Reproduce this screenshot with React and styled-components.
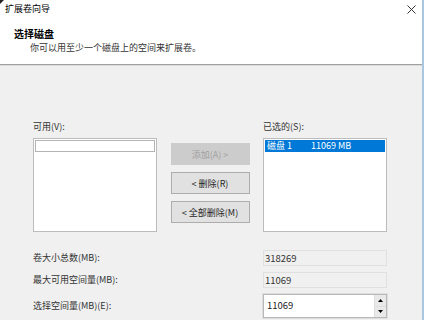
import React from 'react';
import styled, { createGlobalStyle } from 'styled-components';

const GlobalStyle = createGlobalStyle`
  body {
    margin: 0;
    background: #f0f0f0;
    font-family: 'Noto Sans CJK SC', 'Noto Sans', sans-serif;
    -webkit-font-smoothing: antialiased;
  }
`;

const Window = styled.div`
  position: relative;
  width: 422px;
  height: 320px;
  border-right: 2px solid #a9c6e3;
  background: #f0f0f0;
  overflow: hidden;
  color: #1e1e1e;
  font-size: 9px;
  line-height: 12px;

  &::before {
    content: '';
    position: absolute;
    left: 0;
    top: 0;
    border-style: solid;
    border-width: 4px 4px 0 0;
    border-color: #222 transparent transparent transparent;
  }
`;

const TitleBar = styled.div`
  height: 18px;
  display: flex;
  align-items: center;
  justify-content: space-between;
  padding: 0 6px 0 5px;
  background: #fff;
  color: #000;
`;

const Header = styled.div`
  background: #fff;
  padding: 10px 0 10px 14px;
  border-bottom: 1px solid #a0a0a0;
  box-shadow: 0 1px 0 #dadada;
`;

const Heading = styled.div`
  font-size: 10px;
  font-weight: 700;
  color: #000;
`;

const Subtitle = styled.div`
  margin-top: 2px;
  padding-left: 16px;
  color: #333;
`;

const Body = styled.div`
  padding: 56px 0 0 33px;
`;

const Lists = styled.div`
  display: grid;
  grid-template-columns: 124px 106px 124px;
  grid-template-rows: 12px 94px;
  row-gap: 5px;
`;

const Label = styled.div`
  color: #333;
  white-space: nowrap;
`;

const ListBox = styled.div`
  box-sizing: border-box;
  background: #fff;
  border: 1px solid #bcbcbc;
  padding: 1px;
`;

const Item = styled.div`
  box-sizing: border-box;
  height: 12px;
  display: flex;
  align-items: center;
  padding-left: 1px;
  border: 1px solid ${(p) => (p.focus ? '#b4b4b4' : 'transparent')};
  background: ${(p) => (p.selected ? '#0078d7' : 'transparent')};
  color: ${(p) => (p.selected ? '#fff' : '#1e1e1e')};
`;

const Cell = styled.span`
  display: inline-block;
  width: ${(p) => p.w || 'auto'};
`;

const ButtonStack = styled.div`
  grid-column: 2;
  padding-top: 5px;
  display: flex;
  flex-direction: column;
  align-items: center;
  gap: 7px;
`;

const Button = styled.button`
  box-sizing: border-box;
  width: 79px;
  height: 22px;
  padding: 0;
  font-family: inherit;
  font-size: 9px;
  white-space: pre;
  border: 1px solid ${(p) => (p.disabled ? '#cccccc' : '#adadad')};
  background: ${(p) => (p.disabled ? '#cccccc' : '#e1e1e1')};
  color: ${(p) => (p.disabled ? '#a0a0a0' : '#1e1e1e')};
`;

const Fields = styled.div`
  margin-top: 18px;
  display: flex;
  flex-direction: column;
  gap: 6px;
`;

const FieldRow = styled.div`
  display: grid;
  grid-template-columns: 230px 124px;
  align-items: center;
`;

const ValueBox = styled.div`
  box-sizing: border-box;
  height: 16px;
  border: 1px solid #e0e0e0;
  background: #f0f0f0;
  padding-left: 1px;
  line-height: 14px;
  font-size: 9.5px;
  color: #333;
`;

const Spin = styled.div`
  box-sizing: border-box;
  height: 24px;
  display: flex;
  border: 1px solid #b8b8b8;
  box-shadow: 0 0 0 1px #dedede;
  background: #dedede;
`;

const SpinInput = styled.div`
  flex: 1;
  background: #fff;
  padding-left: 3px;
  line-height: 20px;
  font-size: 9.5px;
  color: #222;
  margin-right: 1px;
`;

const SpinButtons = styled.div`
  width: 11px;
  display: flex;
  flex-direction: column;
  gap: 1px;
`;

const SpinButton = styled.div`
  flex: 1;
  display: flex;
  align-items: center;
  justify-content: center;
  background: #e9e9e9;
`;

const Arrow = ({ down }) => (
  <svg width="5" height="3" viewBox="0 0 5 3">
    <path d={down ? 'M0 0 L5 0 L2.5 3 Z' : 'M0 3 L5 3 L2.5 0 Z'} fill="#000" />
  </svg>
);

const CloseIcon = () => (
  <svg width="9" height="9" viewBox="0 0 9 9">
    <path d="M0.5 0.5 L8.5 8.5 M8.5 0.5 L0.5 8.5" stroke="#333" strokeWidth="1" />
  </svg>
);

export default function App() {
  return (
    <>
      <GlobalStyle />
      <Window>
        <TitleBar>
          <span>扩展卷向导</span>
          <CloseIcon />
        </TitleBar>
        <Header>
          <Heading>选择磁盘</Heading>
          <Subtitle>你可以用至少一个磁盘上的空间来扩展卷。</Subtitle>
        </Header>
        <Body>
          <Lists>
            <Label>可用(V):</Label>
            <span />
            <Label>已选的(S):</Label>
            <ListBox>
              <Item focus />
            </ListBox>
            <ButtonStack>
              <Button disabled>添加(A) &gt;</Button>
              <Button>&lt; 删除(R)</Button>
              <Button>&lt; 全部删除(M)</Button>
            </ButtonStack>
            <ListBox>
              <Item selected>
                <Cell w="44px">磁盘 1</Cell>
                <Cell>11069 MB</Cell>
              </Item>
            </ListBox>
          </Lists>
          <Fields>
            <FieldRow>
              <Label>卷大小总数(MB):</Label>
              <ValueBox>318269</ValueBox>
            </FieldRow>
            <FieldRow>
              <Label>最大可用空间量(MB):</Label>
              <ValueBox>11069</ValueBox>
            </FieldRow>
            <FieldRow>
              <Label>选择空间量(MB)(E):</Label>
              <Spin>
                <SpinInput>11069</SpinInput>
                <SpinButtons>
                  <SpinButton><Arrow /></SpinButton>
                  <SpinButton><Arrow down /></SpinButton>
                </SpinButtons>
              </Spin>
            </FieldRow>
          </Fields>
        </Body>
      </Window>
    </>
  );
}
